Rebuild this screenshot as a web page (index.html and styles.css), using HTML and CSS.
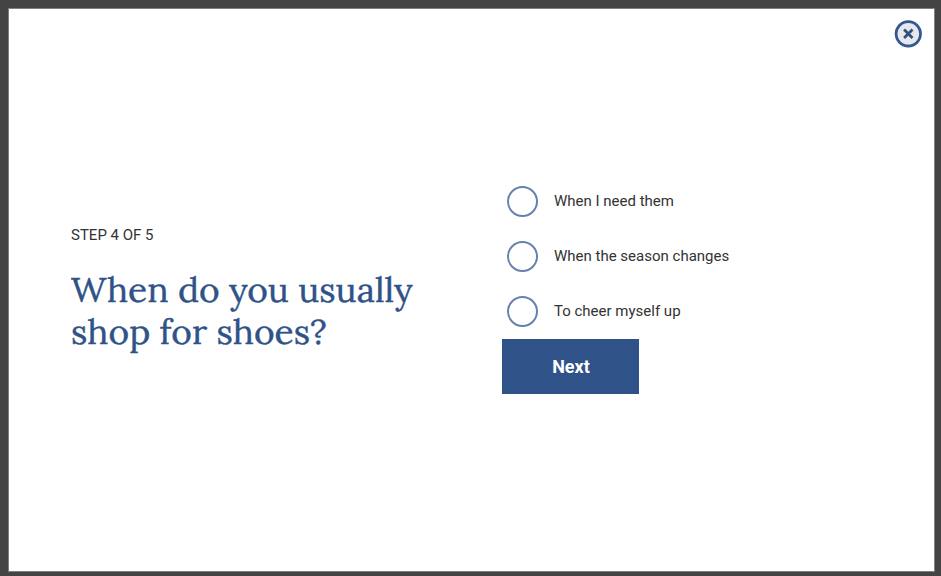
FILE: index.html
```html
<!DOCTYPE html>
<html lang="en">
<head>
<meta charset="utf-8">
<title>Shoe survey</title>
<link rel="stylesheet" href="styles.css">
</head>
<body>
<main class="dialog">
  <button class="close" aria-label="Close">
    <svg viewBox="0 0 28 28" width="28" height="28"><circle cx="14.3" cy="13.8" r="12.2"/><path d="M10.1 9.6l8.4 8.4M18.5 9.6l-8.4 8.4"/></svg>
  </button>
  <section class="question">
    <p class="step">STEP 4 OF 5</p>
    <h1 class="title">When do you usually<br>shop for shoes?</h1>
  </section>
  <form class="answers">
    <label class="option"><input type="radio" name="when"><span>When I need them</span></label>
    <label class="option"><input type="radio" name="when"><span>When the season changes</span></label>
    <label class="option"><input type="radio" name="when"><span>To cheer myself up</span></label>
    <button type="button" class="next">Next</button>
  </form>
</main>
</body>
</html>
```
FILE: styles.css
```css
* { box-sizing: border-box; }
body {
  margin: 0;
  height: 576px;
  padding: 9px 7px 5px 9px;
  background: #444;
  font-family: Roboto, sans-serif;
  color: #333;
}
.dialog {
  position: relative;
  height: 562px;
  background: #fff;
  box-shadow: 0 0 0 1px #808080;
  display: grid;
  grid-template-columns: 493px 1fr;
  align-items: start;
}
.close {
  position: absolute;
  top: 11px;
  right: 12px;
  width: 28px;
  height: 28px;
  padding: 0;
  border: 0;
  background: none;
}
.close svg { display: block; }
.close circle { fill: #e6e8ee; stroke: #34578f; stroke-width: 2.8; }
.close path { stroke: #34507f; stroke-width: 2.8; }
.question { padding: 216px 0 0 62px; }
.step { margin: 0; font-size: 15px; line-height: 20px; }
.title {
  margin: 23px 0 0;
  font: 400 35.3px/42px "Lora", "Liberation Serif", serif;
  color: #2f5288;
  -webkit-text-stroke: 0.4px #2f5288;
  white-space: nowrap;
}
.answers { padding-top: 165px; }
.option {
  display: flex;
  align-items: center;
  gap: 16px;
  height: 55px;
  padding-left: 5px;
  font-size: 15px;
}
.option span { margin-bottom: 1px; }
.option input {
  appearance: none;
  width: 31px;
  height: 31px;
  margin: 0;
  border: 2px solid #6680b1;
  border-radius: 50%;
}
.next {
  width: 137px;
  height: 55px;
  padding: 0 0 0 1px;
  border: 0;
  background: #2f5288;
  color: #fff;
  font: 700 18px Roboto, sans-serif;
}
```
